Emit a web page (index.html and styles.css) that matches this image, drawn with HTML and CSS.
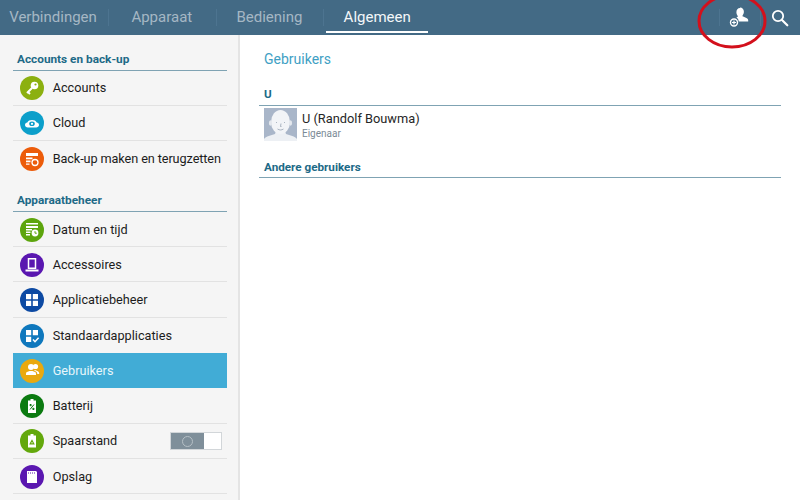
FILE: index.html
```html
<!DOCTYPE html>
<html lang="nl">
<head>
<meta charset="utf-8">
<title>Gebruikers</title>
<link rel="stylesheet" href="styles.css">
</head>
<body>
<div class="app">
  <header class="topbar">
    <nav class="tabs">
      <div class="tab">Verbindingen</div>
      <div class="tab">Apparaat</div>
      <div class="tab">Bediening</div>
      <div class="tab active">Algemeen</div>
    </nav>
    <div class="actions">
      <span class="sep first-sep"></span>
      <div class="action">
        <svg viewBox="0 0 24 24" width="24" height="24"><path fill="#fff" d="M13 1.500c2.300 0 3.900 1.900 3.900 4.200 0 1.500-.6 2.700-1.200 3.500-.4.600-.2 1.100.4 1.400l3.300 1.300c1.200.5 1.800 1.500 1.800 2.600v1h-9.500c0-1.900-.9-3.200-2.300-4l.8-.4c.6-.3.800-.8.400-1.400-.6-.8-1.200-2-1.200-3.500 0-2.300 1.400-4.200 3.600-4.200z"/><circle cx="7" cy="16.500" r="3.500" fill="none" stroke="#fff" stroke-width="1.400"/><path stroke="#fff" stroke-width="1.200" d="M5 16.500h4M7 14.500v4"/></svg>
      </div>
      <span class="sep second-sep"></span>
      <div class="action">
        <svg viewBox="0 0 18 18" width="18" height="18"><circle cx="7" cy="7" r="5.200" fill="none" stroke="#fff" stroke-width="1.800"/><path stroke="#fff" stroke-width="2.200" stroke-linecap="round" d="M11 11l5.300 5.300"/></svg>
      </div>
    </div>
  </header>
  <div class="body">
    <aside class="sidebar">
      <h2 class="side-head first">Accounts en back-up</h2>
      <div class="row"><span class="ico lime"><svg viewBox="0 0 24 24"><circle cx="14.500" cy="9.500" r="3.800" fill="#fff"/><circle cx="15.500" cy="8.500" r="1.100" fill="#8cb010"/><path stroke="#fff" stroke-width="2" fill="none" d="M12 12l-5 5M8 16l2 2"/></svg></span><span class="label">Accounts</span></div>
      <div class="row"><span class="ico cyan"><svg viewBox="0 0 24 24"><path fill="#fff" d="M5 14c0-1.400 1-2.400 2.300-2.400C8 9.800 9.800 9 12 9s4 .8 4.700 2.600c1.300 0 2.300 1 2.300 2.400s-1.300 2.400-2.800 2.400H7.800C6.300 16.400 5 15.400 5 14z"/><ellipse cx="12" cy="12.800" rx="2.800" ry="2.300" fill="#0c9fca"/><circle cx="12" cy="12.800" r="1.100" fill="#fff"/></svg></span><span class="label">Cloud</span></div>
      <div class="row last"><span class="ico orange"><svg viewBox="0 0 24 24"><path fill="#fff" d="M6 6h12v3H6zM6 10.500h6.500v1.800H6zM6 13.500h4.500v1.800H6zM6 16.500h3.500v1.200H6z"/><circle cx="15" cy="15.500" r="3" fill="none" stroke="#fff" stroke-width="1.300"/></svg></span><span class="label tight">Back-up maken en terugzetten</span></div>

      <h2 class="side-head second">Apparaatbeheer</h2>
      <div class="row"><span class="ico green"><svg viewBox="0 0 24 24"><path fill="#fff" d="M6 5h12v1.500H6zM6 8h12v2H6zM6 11h6v1.500H6zM6 13.500h4.500V15H6zM6 16h4v1.500H6z"/><circle cx="15" cy="15" r="3.400" fill="#fff"/><path stroke="#5da50d" stroke-width="1" fill="none" d="M15 13.200v2h1.800"/></svg></span><span class="label">Datum en tijd</span></div>
      <div class="row"><span class="ico purple"><svg viewBox="0 0 24 24"><path fill="none" stroke="#fff" stroke-width="1.500" d="M8.500 5.800h7v9.500h-7z"/><path fill="#fff" d="M5.500 16.500h13V18.500h-13z"/></svg></span><span class="label">Accessoires</span></div>
      <div class="row"><span class="ico navy"><svg viewBox="0 0 24 24"><path fill="#fff" d="M6 6h5.200v5.200H6zM12.800 6H18v5.200h-5.200zM6 12.800h5.200V18H6zM12.800 12.800H18V18h-5.200z"/></svg></span><span class="label">Applicatiebeheer</span></div>
      <div class="row last"><span class="ico blue"><svg viewBox="0 0 24 24"><path fill="#fff" d="M6 6h5.200v5.200H6zM12.800 6H18v5.200h-5.200zM6 12.800h5.200V18H6z"/><path fill="none" stroke="#fff" stroke-width="1.500" d="M13 15.500l2 2.200 3.600-4"/></svg></span><span class="label">Standaardapplicaties</span></div>
      <div class="row selected"><span class="ico amber"><svg viewBox="0 0 24 24"><circle cx="11" cy="8" r="3" fill="#fff"/><path fill="#fff" d="M6 16v-1.500c0-.7.400-1.100 1-1.400l2.500-1.100h3l2.500 1.100c.6.300 1 .7 1 1.400V16z"/><circle cx="15.500" cy="7.500" r="2.600" fill="#fff"/><path fill="#fff" d="M15 11l2.800 1.300c.6.300 1 .6 1.200 1.200l.3 1.500h-2c0-1-.4-2-1.300-2.500L14 11.500z"/></svg></span><span class="label">Gebruikers</span></div>
      <div class="row"><span class="ico dkgreen"><svg viewBox="0 0 24 24"><path fill="#fff" d="M10.500 5h3v1.500H16v12.500H8V6.500h2.500z"/><path stroke="#0b7a10" stroke-width="1" fill="none" d="M10 15.500l4-5M10 10.500h1.200v1.200H10zM12.800 14.300H14v1.200h-1.200z"/></svg></span><span class="label">Batterij</span></div>
      <div class="row"><span class="ico leaf"><svg viewBox="0 0 24 24"><path fill="#fff" d="M10.500 5h3v1.500H16v12H8v-12h2.500z"/><path fill="none" stroke="#63a80c" stroke-width="1.200" d="M10.200 14.800l1.800-3.300 1.800 3.300z"/></svg></span><span class="label">Spaarstand</span>
        <span class="toggle"><span class="toggle-off"><span class="toggle-ring"></span></span><span class="toggle-on"></span></span>
      </div>
      <div class="row"><span class="ico violet"><svg viewBox="0 0 24 24"><path fill="#fff" d="M7 6h9l1 1v11H7z"/><path stroke="#5a17b0" stroke-width="1.200" stroke-dasharray="1 1" d="M8 8h8"/></svg></span><span class="label">Opslag</span></div>
      <div class="row"><span class="ico steel"></span></div>
    </aside>
    <main class="content">
      <h1 class="title">Gebruikers</h1>
      <h2 class="group owner">U</h2>
      <div class="user">
        <svg class="avatar" viewBox="0 0 33 33" width="33" height="33">
          <rect width="33" height="33" fill="#a9b6c9"/>
          <path fill="#edf0f4" d="M0 33v-2c2-3 7-3.500 11-5l1-3h9l1 3c4 1.500 9 2 11 5v2z"/>
          <ellipse cx="16.500" cy="14" rx="9.500" ry="12" fill="#f2f4f7"/>
          <ellipse cx="6.500" cy="15" rx="1.600" ry="2.800" fill="#e4e8ee"/>
          <ellipse cx="26.500" cy="15" rx="1.600" ry="2.800" fill="#e4e8ee"/>
          <path fill="none" stroke="#8d99aa" stroke-width=".7" d="M12 14.500h1M20 14.500h1M17 15.500l-.5 3h1M13.500 21c2 1.300 4 1.300 6 0"/>
        </svg>
        <div class="user-text">
          <div class="user-name">U (Randolf Bouwma)</div>
          <div class="user-role">Eigenaar</div>
        </div>
      </div>
      <h2 class="group others">Andere gebruikers</h2>
    </main>
  </div>
  <svg class="mark" viewBox="0 0 800 500" width="800" height="500"><ellipse cx="732" cy="21" rx="33" ry="26" fill="none" stroke="#d3101c" stroke-width="3"/></svg>
</div>
</body>
</html>
```
FILE: styles.css
```css
* { box-sizing: border-box; }
html, body { margin: 0; padding: 0; }
body { font-family: Roboto, "Liberation Sans", sans-serif; background: #fff; overflow: hidden; }
.app { position: relative; width: 800px; height: 500px; overflow: hidden; display: flex; flex-direction: column; }
.topbar { height: 35px; flex: none; background: #436a85; display: flex; justify-content: space-between; }
.tabs { display: flex; height: 35px; }
.tab { width: 107.600px; height: 35px; padding-top: 8px; text-align: center; font-size: 15px; line-height: 18px; color: #a5b7c4; position: relative; }
.tab:first-child { width: 108px; padding-right: 2px; }
.tab + .tab::before { content: ""; position: absolute; left: 0; top: 9px; height: 17px; width: 1px; background: #4d7490; }
.tab.active { color: #f4f7f9; border-bottom: 2px solid #fff; height: 33px; width: 102px; margin-left: 3px; }
.tab.active::before { left: -3px; }
.actions { display: flex; align-items: center; padding-right: 11px; }
.action { display: flex; }
.sep { width: 1px; height: 17px; background: #4d7490; }
.first-sep { margin-right: 7px; }
.second-sep { margin: 0 10px 0 9px; }
.body { flex: 1; display: flex; min-height: 0; }
.sidebar { width: 240px; flex: none; background: #f5f5f5; border-right: 2px solid #e4e4e4; padding: 0 11px 0 13px; overflow: hidden; }
.side-head { margin: 0; padding: 0 0 3px 4px; height: 18.500px; font-size: 11.800px; line-height: 14px; font-weight: 700; color: #1d6a87; border-bottom: 1.500px solid #7fa3b3; }
.side-head.first { margin-top: 17px; }
.side-head.second { margin-top: 17px; }
.row { height: 35.300px; display: flex; align-items: center; padding: 1px 0 0 7px; border-bottom: 1px solid #e2e2e2; }
.row.last { border-bottom: 0; }
.row.selected { background: #41acd6; border-bottom: 0; }
.ico { width: 24px; height: 24px; border-radius: 50%; flex: none; display: flex; align-items: center; justify-content: center; margin-right: 8.700px; }
.ico svg { width: 24px; height: 24px; display: block; }
.lime { background: #8cb010; }
.cyan { background: #0c9fca; }
.orange { background: #ec5c0a; }
.green { background: #5da50d; }
.purple { background: #5a17b0; }
.navy { background: #0d4aa3; }
.blue { background: #0f78bd; }
.amber { background: #e9a90f; }
.dkgreen { background: #0b7a10; }
.leaf { background: #63a80c; }
.violet { background: #5a17b0; }
.steel { background: #6f9bc0; }
.label { font-size: 12.700px; line-height: 16px; color: #1c1c1c; white-space: nowrap; }
.label.tight { letter-spacing: -0.1px; }
.selected .label { color: #e8f6fb; }
.toggle { margin-left: auto; margin-right: 5px; display: flex; width: 52px; height: 18px; border: 1px solid #d2d6d9; }
.toggle-off { width: 33px; background: #7f8f9a; display: flex; align-items: center; justify-content: center; }
.toggle-ring { width: 11px; height: 11px; border-radius: 50%; border: 1.500px solid #b6c0c6; }
.toggle-on { flex: 1; background: #fff; }
.content { flex: 1; padding: 0 19px 0 19px; }
.title { margin: 0 0 0 5px; padding-top: 16px; font-size: 14px; line-height: 17px; font-weight: 400; color: #3f9fc4; }
.group { margin: 0; padding: 0 0 1px 5px; font-size: 11.700px; line-height: 15px; font-weight: 700; color: #1d6a87; border-bottom: 1.500px solid #7fa3b3; }
.group.owner { margin-top: 19px; height: 18.500px; }
.group.others { margin-top: 19px; height: 17.500px; }
.user { display: flex; padding: 2px 0 0 5px; height: 35.500px; }
.avatar { flex: none; display: block; }
.user-text { margin-left: 5px; padding-top: 3px; }
.user-name { font-size: 12.800px; line-height: 16px; color: #262626; }
.user-role { font-size: 10px; line-height: 13px; color: #7b8a96; }
.mark { position: absolute; left: 0; top: 0; pointer-events: none; }
```
